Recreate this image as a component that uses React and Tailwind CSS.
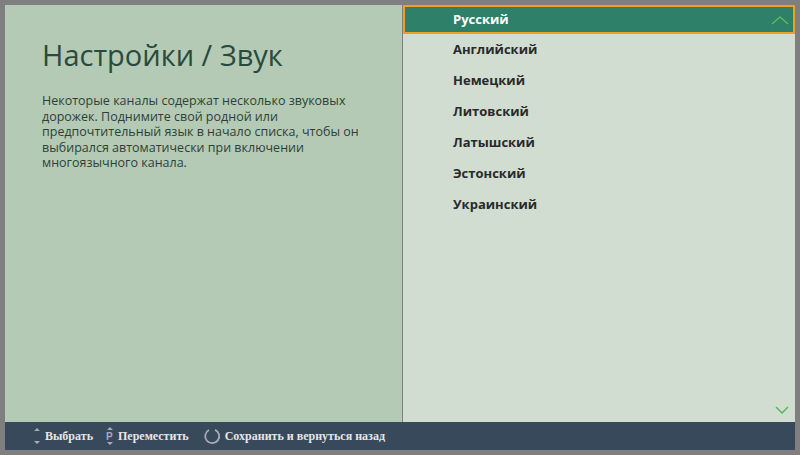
export default function App(){
const langs=["Английский","Немецкий","Литовский","Латышский","Эстонский","Украинский"];
return(<div className="w-[800px] h-[455px] bg-[#7f7f7f] p-[5px] flex flex-col" style={{fontFamily:'"Open Sans","Noto Sans",sans-serif'}}>
<div className="flex flex-1 min-h-0">
<div className="w-[397px] bg-[#b4cab5] pl-[37px] pt-[30px] pr-[30px]">
<div className="text-[29px] text-[#2a4a3e] leading-[40px]">Настройки / Звук</div>
<p className="mt-[18px] text-[12.5px] leading-[15.5px] text-[#2f3f38] w-[330px]">Некоторые каналы содержат несколько звуковых дорожек. Поднимите свой родной или предпочтительный язык в начало списка, чтобы он выбирался автоматически при включении многоязычного канала.</p>
</div>
<div className="flex-1 bg-[#d0ddd0] ml-[1px] relative">
<div className="h-[29px] bg-[#2e8068] border-2 border-[#f0a020] flex items-center pl-[48px] text-white font-bold text-[13px] justify-between pr-[4px]">
<span>Русский</span>
<svg width="18" height="10" viewBox="0 0 18 10"><path d="M1 9l8-7 8 7" stroke="#5cb85c" strokeWidth="1.5" fill="none"/></svg>
</div>
{langs.map(l=><div key={l} className="h-[31px] flex items-center pl-[50px] font-bold text-[13px] text-[#2a2a2a]">{l}</div>)}
<svg className="absolute right-[6px] bottom-[8px]" width="14" height="8" viewBox="0 0 14 8"><path d="M1 1l6 6 6-6" stroke="#5cb85c" strokeWidth="1.5" fill="none"/></svg>
</div>
</div>
<div className="h-[28px] bg-[#37495a] flex items-center pl-[27px] gap-[12px] text-[#e6e6e6] text-[12px] font-bold" style={{fontFamily:'"Liberation Serif",serif'}}>
<div className="flex items-center gap-[3px]"><svg width="10" height="22" viewBox="0 0 10 22"><path d="M2 6l3-3 3 3z M2 16l3 3 3-3z" fill="#aab"/></svg>Выбрать</div>
<div className="flex items-center gap-[3px]"><svg width="10" height="22" viewBox="0 0 10 22"><path d="M2 5l3-3 3 3z M2 17l3 3 3-3z" fill="#aab"/><text x="1" y="15" fontSize="10" fill="#aab" fontFamily="Liberation Sans">P</text></svg>Переместить</div>
<div className="flex items-center gap-[4px] ml-[2px]"><svg width="18" height="18" viewBox="0 0 18 18"><path d="M6 3A7 7 0 1 0 12 2.8" stroke="#aab" strokeWidth="1.8" fill="none"/></svg>Сохранить и вернуться назад</div>
</div>
</div>);}
